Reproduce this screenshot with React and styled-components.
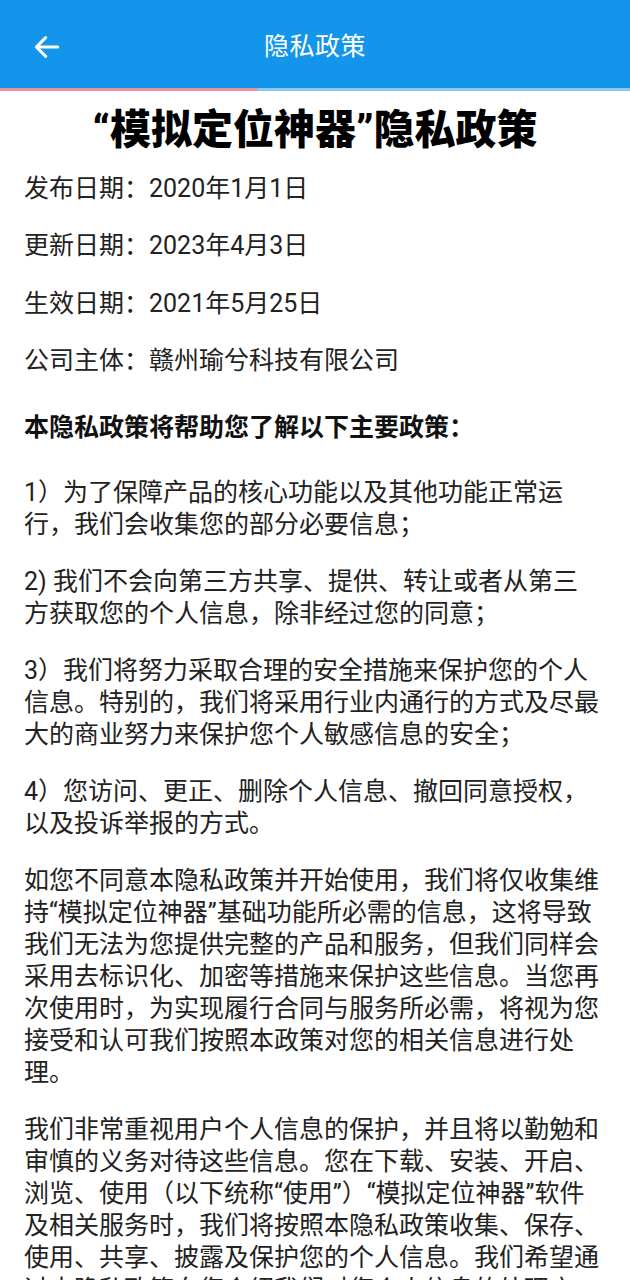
import React from "react"
import styled, { createGlobalStyle } from "styled-components"

const GlobalStyle = createGlobalStyle`
    body {
        margin: 0;
        background: #ffffff;
        font-family: Roboto, "Noto Sans CJK SC", sans-serif;
        color: #222222;
    }
`

const Page = styled.div`
    width: 630px;
    background: #ffffff;
`

const TopBar = styled.header`
    position: relative;
    height: 88px;
    background: #1495ec;
    display: flex;
    align-items: center;
    justify-content: center;
`

const BackButton = styled.button`
    position: absolute;
    left: 29px;
    top: 29px;
    width: 36px;
    height: 36px;
    padding: 0;
    border: none;
    background: none;
    display: flex;
    align-items: center;
    justify-content: center;
    cursor: pointer;
`

const BarTitle = styled.h1`
    margin: 0;
    font-size: 25px;
    font-weight: 400;
    color: #ffffff;
    letter-spacing: 0.5px;
`

const Progress = styled.div`
    height: 3px;
    background: #8cc8f0;
`

const ProgressFill = styled.div`
    height: 100%;
    background: #e98fa0;
`

const Content = styled.main`
    padding: 11px 30px 40px 24px;
`

const DocTitle = styled.h2`
    margin: 0 -6px 15px 0;
    text-align: center;
    font-size: 41px;
    line-height: 56px;
    font-weight: 900;
    color: #000000;
`

const Para = styled.p`
    margin: 0 0 ${ p => p.$gap || 25 }px;
    font-size: 25px;
    line-height: 32px;
    font-weight: ${ p => p.$bold ? 700 : 400 };
    color: ${ p => p.$bold ? "#111111" : "#222222" };
`

const Heading = styled(Para)`
    margin: 35px 0 33px;
`

const ArrowIcon = () => (
    <svg width="32" height="32" viewBox="0 0 24 24" fill="none" stroke="#ffffff" strokeWidth="2.3" strokeLinecap="round" strokeLinejoin="round">
        <path d="M20 12H4.5" />
        <path d="M11 5l-7 7 7 7" />
    </svg>
)

const dates = [
    "发布日期：2020年1月1日",
    "更新日期：2023年4月3日",
    "生效日期：2021年5月25日",
    "公司主体：赣州瑜兮科技有限公司",
]

const points = [
    "1）为了保障产品的核心功能以及其他功能正常运行，我们会收集您的部分必要信息；",
    "2) 我们不会向第三方共享、提供、转让或者从第三方获取您的个人信息，除非经过您的同意；",
    "3）我们将努力采取合理的安全措施来保护您的个人信息。特别的，我们将采用行业内通行的方式及尽最大的商业努力来保护您个人敏感信息的安全；",
    "4）您访问、更正、删除个人信息、撤回同意授权，以及投诉举报的方式。",
    "如您不同意本隐私政策并开始使用，我们将仅收集维持“模拟定位神器”基础功能所必需的信息，这将导致我们无法为您提供完整的产品和服务，但我们同样会采用去标识化、加密等措施来保护这些信息。当您再次使用时，为实现履行合同与服务所必需，将视为您接受和认可我们按照本政策对您的相关信息进行处理。",
    "我们非常重视用户个人信息的保护，并且将以勤勉和审慎的义务对待这些信息。您在下载、安装、开启、浏览、使用（以下统称“使用”）“模拟定位神器”软件及相关服务时，我们将按照本隐私政策收集、保存、使用、共享、披露及保护您的个人信息。我们希望通过本隐私政策向您介绍我们对您个人信息的处理方式。",
]

const App = () => {
    const progress = 41

    return (
        <Page>
            <GlobalStyle />
            <TopBar>
                <BackButton aria-label="返回">
                    <ArrowIcon />
                </BackButton>
                <BarTitle>隐私政策</BarTitle>
            </TopBar>
            <Progress>
                <ProgressFill style={{ width: `${ progress }%` }} />
            </Progress>
            <Content>
                <DocTitle>“模拟定位神器”隐私政策</DocTitle>
                {dates.map(d => (
                    <Para key={d} $gap={25.33}>{d}</Para>
                ))}
                <Heading $bold>本隐私政策将帮助您了解以下主要政策：</Heading>
                {points.map(t => (
                    <Para key={t}>{t}</Para>
                ))}
            </Content>
        </Page>
    )
}

export default App
